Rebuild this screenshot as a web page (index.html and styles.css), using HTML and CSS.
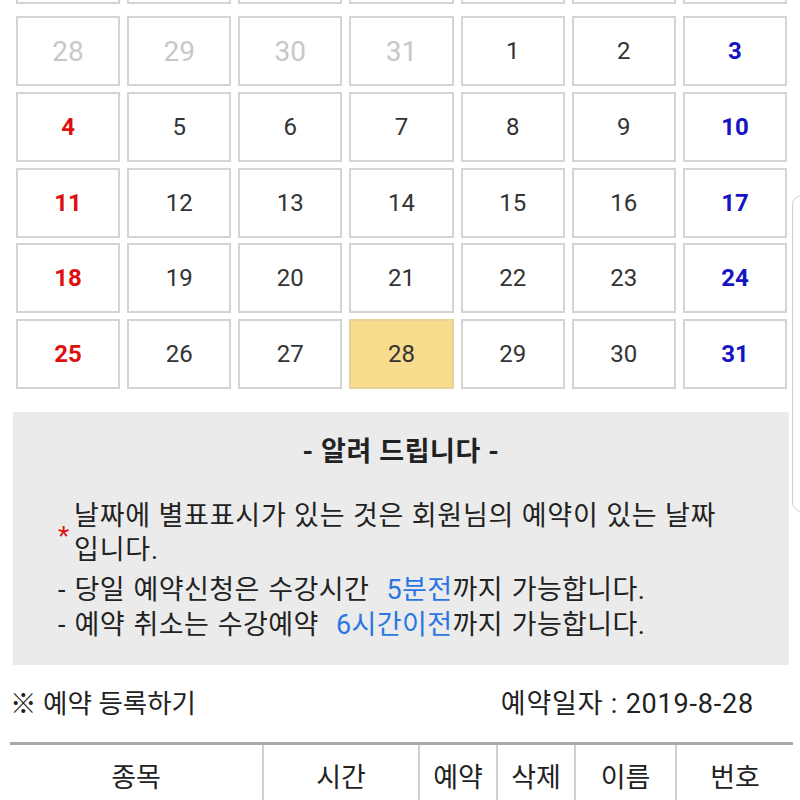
FILE: index.html
```html
<!DOCTYPE html>
<html lang="ko">
<head>
<meta charset="utf-8">
<title>예약</title>
<link rel="stylesheet" href="styles.css">
</head>
<body>
<div class="cal cal-top">
  <div class="cell"></div><div class="cell"></div><div class="cell"></div><div class="cell"></div><div class="cell"></div><div class="cell"></div><div class="cell"></div>
</div>
<div class="cal">
  <div class="cell other">28</div><div class="cell other">29</div><div class="cell other">30</div><div class="cell other">31</div><div class="cell">1</div><div class="cell">2</div><div class="cell sat">3</div>
  <div class="cell sun">4</div><div class="cell">5</div><div class="cell">6</div><div class="cell">7</div><div class="cell">8</div><div class="cell">9</div><div class="cell sat">10</div>
  <div class="cell sun">11</div><div class="cell">12</div><div class="cell">13</div><div class="cell">14</div><div class="cell">15</div><div class="cell">16</div><div class="cell sat">17</div>
  <div class="cell sun">18</div><div class="cell">19</div><div class="cell">20</div><div class="cell">21</div><div class="cell">22</div><div class="cell">23</div><div class="cell sat">24</div>
  <div class="cell sun">25</div><div class="cell">26</div><div class="cell">27</div><div class="cell today">28</div><div class="cell">29</div><div class="cell">30</div><div class="cell sat">31</div>
</div>

<div class="notice">
  <div class="notice-title">- 알려 드립니다 -</div>
  <div class="star-item">
    <span class="star">*</span>
    <span class="star-text">날짜에 별표표시가 있는 것은 회원님의 예약이 있는 날짜 입니다.</span>
  </div>
  <div class="notice-line first">- 당일 예약신청은 수강시간&nbsp; <span class="hl">5분전</span>까지 가능합니다.</div>
  <div class="notice-line">- 예약 취소는 수강예약&nbsp; <span class="hl">6시간이전</span>까지 가능합니다.</div>
</div>

<div class="reg-bar">
  <span class="reg-title">※ 예약 등록하기</span>
  <span class="reg-date">예약일자 : 2019-8-28</span>
</div>

<table class="res-table">
  <colgroup>
    <col class="c1"><col class="c2"><col class="c3"><col class="c4"><col class="c5"><col class="c6">
  </colgroup>
  <thead>
    <tr><th>종목</th><th>시간</th><th>예약</th><th>삭제</th><th>이름</th><th>번호</th></tr>
  </thead>
</table>

<div class="scroll-hint"></div>
</body>
</html>
```

FILE: styles.css
```css
html, body {
  margin: 0;
  padding: 0;
  background: #ffffff;
}
body {
  font-family: Roboto, "Noto Sans CJK KR", sans-serif;
  color: #222222;
  width: 800px;
  height: 800px;
  overflow: hidden;
  position: relative;
}

.cal {
  display: grid;
  grid-template-columns: repeat(7, 1fr);
  grid-auto-rows: 70px;
  column-gap: 7px;
  row-gap: 5.8px;
  width: 771px;
  margin-left: 16px;
}
.cal-top {
  margin-top: -66px;
  margin-bottom: 12px;
}

.cell {
  box-sizing: border-box;
  border: 2px solid #d4d4d4;
  display: flex;
  align-items: center;
  justify-content: center;
  font-size: 24px;
  color: #333333;
}
.cell.other {
  color: #c8c8c8;
  font-size: 28px;
}
.cell.sun {
  color: #dd0f0f;
  font-weight: 700;
}
.cell.sat {
  color: #1414c4;
  font-weight: 700;
}
.cell.today {
  background: #f8dc8d;
  border-color: #e6d29c;
}

.notice {
  box-sizing: border-box;
  margin: 23px 11px 0 13px;
  background: #ebebeb;
  padding: 22px 40px 25px 45px;
  height: 253px;
}
.notice-title {
  text-align: center;
  font-weight: 700;
  font-size: 27px;
  line-height: 36px;
  letter-spacing: 0.6px;
  margin-left: -5px;
  color: #222222;
}
.star-item {
  display: flex;
  align-items: center;
  margin-top: 29px;
}
.star {
  color: #e01010;
  font-size: 26px;
  width: 16px;
  flex: none;
  line-height: 1;
  padding-top: 6px;
}
.star-text {
  font-size: 27px;
  line-height: 34px;
  letter-spacing: 0.8px;
  word-break: keep-all;
}
.notice-line {
  font-size: 27px;
  line-height: 35px;
  letter-spacing: 0.4px;
  word-spacing: 1.5px;
  white-space: nowrap;
}
.notice-line.first {
  margin-top: 6px;
}
.hl {
  color: #2a76e2;
}

.reg-bar {
  display: flex;
  justify-content: space-between;
  align-items: center;
  margin-top: 18px;
  padding: 0 46px 0 10px;
  height: 36px;
  font-size: 26.5px;
}
.reg-title {
  color: #222222;
}
.reg-date {
  color: #222222;
  font-size: 27px;
  letter-spacing: 0.8px;
}

.res-table {
  margin-top: 23px;
  margin-left: 10px;
  width: 783px;
  table-layout: fixed;
  border-collapse: collapse;
  border-top: 3px solid #a9a9a9;
}
.res-table col.c1 { width: 253px; }
.res-table col.c2 { width: 156px; }
.res-table col.c3 { width: 78px; }
.res-table col.c4 { width: 78px; }
.res-table col.c5 { width: 101px; }
.res-table col.c6 { width: 117px; }
.res-table th {
  height: 60px;
  padding: 0;
  font-weight: 400;
  font-size: 27px;
  color: #222222;
  text-align: center;
  border-left: 2px solid #d0d0d0;
}
.res-table th:first-child {
  border-left: none;
}

.scroll-hint {
  position: absolute;
  left: 792px;
  top: 195px;
  width: 24px;
  height: 315px;
  border: 1.5px solid #cfcfcf;
  border-radius: 10px;
  background: #ffffff;
}
```
